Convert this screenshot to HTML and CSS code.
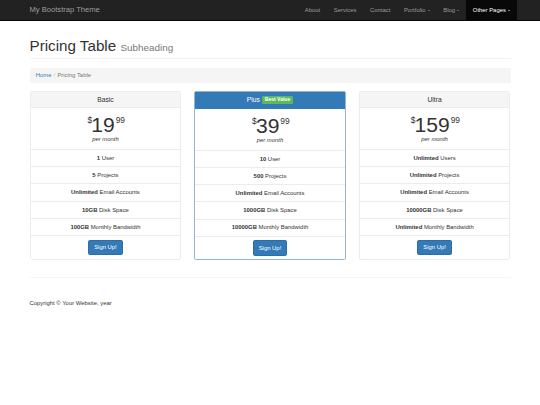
FILE: index.html
```html
<html>
<head>
    <meta charset="UTF-8">
    <meta name="viewport" content="width=device-width, initial-scale=1.0">
    <title>Pricing Table - My Bootstrap Theme</title>
    <link rel="stylesheet" href="styles.css">
</head>

<body>
<nav class="navbar">
    <div class="container navbar-inner">
        <a class="navbar-brand" href="#">My Bootstrap Theme</a>
        <ul class="nav">
            <li><a href="#">About</a></li>
            <li><a href="#">Services</a></li>
            <li><a href="#">Contact</a></li>
            <li><a href="#">Portfolio <span class="caret"></span></a></li>
            <li><a href="#">Blog <span class="caret"></span></a></li>
            <li class="active"><a href="#">Other Pages <span class="caret"></span></a></li>
        </ul>
    </div>
</nav>

<div class="container">
    <h1 class="page-header">Pricing Table <small>Subheading</small></h1>
    <ol class="breadcrumb">
        <li><a href="#">Home</a></li>
        <li class="active">Pricing Table</li>
    </ol>

    <div class="row">
        <div class="panel">
            <div class="panel-heading">
                <h3 class="panel-title">Basic</h3>
            </div>
            <div class="panel-body">
                <span class="price"><sup>$</sup>19<sup>99</sup></span>
                <span class="period">per month</span>
            </div>
            <ul class="list-group">
                <li class="list-group-item"><strong>1</strong> User</li>
                <li class="list-group-item"><strong>5</strong> Projects</li>
                <li class="list-group-item"><strong>Unlimited</strong> Email Accounts</li>
                <li class="list-group-item"><strong>10GB</strong> Disk Space</li>
                <li class="list-group-item"><strong>100GB</strong> Monthly Bandwidth</li>
                <li class="list-group-item"><a href="#" class="btn">Sign Up!</a></li>
            </ul>
        </div>

        <div class="panel panel-primary">
            <div class="panel-heading">
                <h3 class="panel-title">Plus <span class="label">Best Value</span></h3>
            </div>
            <div class="panel-body">
                <span class="price"><sup>$</sup>39<sup>99</sup></span>
                <span class="period">per month</span>
            </div>
            <ul class="list-group">
                <li class="list-group-item"><strong>10</strong> User</li>
                <li class="list-group-item"><strong>500</strong> Projects</li>
                <li class="list-group-item"><strong>Unlimited</strong> Email Accounts</li>
                <li class="list-group-item"><strong>1000GB</strong> Disk Space</li>
                <li class="list-group-item"><strong>10000GB</strong> Monthly Bandwidth</li>
                <li class="list-group-item"><a href="#" class="btn">Sign Up!</a></li>
            </ul>
        </div>

        <div class="panel">
            <div class="panel-heading">
                <h3 class="panel-title">Ultra</h3>
            </div>
            <div class="panel-body">
                <span class="price"><sup>$</sup>159<sup>99</sup></span>
                <span class="period">per month</span>
            </div>
            <ul class="list-group">
                <li class="list-group-item"><strong>Unlimted</strong> Users</li>
                <li class="list-group-item"><strong>Unlimited</strong> Projects</li>
                <li class="list-group-item"><strong>Unlimited</strong> Email Accounts</li>
                <li class="list-group-item"><strong>10000GB</strong> Disk Space</li>
                <li class="list-group-item"><strong>Unlimited</strong> Monthly Bandwidth</li>
                <li class="list-group-item"><a href="#" class="btn">Sign Up!</a></li>
            </ul>
        </div>
    </div>

    <hr>

    <footer>
        <p>Copyright &copy; Your Website, year</p>
    </footer>
</div>
</body>
</html>
```

FILE: styles.css
```css
        body {
            font-family: "Liberation Sans", Arial, Helvetica, sans-serif;
            font-size: 5.9px;
            line-height: 8.44px;
            color: #333;
            background-color: #fff;
            margin: 0;
            padding: 0;
        }

        a {
            color: #337ab7;
            text-decoration: none;
        }

        .container {
            width: 481px;
            margin: 0 auto;
        }

        /* top bar */
        .navbar {
            height: 20px;
            background-color: #222;
            border-bottom: 1px solid #080808;
        }

        .navbar-inner {
            display: flex;
            justify-content: space-between;
            align-items: stretch;
            height: 100%;
        }

        .navbar-brand {
            color: #9d9d9d;
            font-size: 7.6px;
            line-height: 20px;
        }

        .nav {
            display: flex;
            list-style: none;
            margin: 0 -6.33px 0 0;
            padding: 0;
        }

        .nav li a {
            display: block;
            padding: 0 6.8px;
            line-height: 20px;
            color: #9d9d9d;
        }

        .nav li.active a {
            color: #fff;
            background-color: #080808;
        }

        .caret {
            display: inline-block;
            width: 0;
            height: 0;
            margin-left: 0.5px;
            vertical-align: middle;
            border-top: 1.7px solid;
            border-right: 1.7px solid transparent;
            border-left: 1.7px solid transparent;
        }

        /* heading */
        .page-header {
            font-size: 15.2px;
            font-weight: 500;
            line-height: 16.7px;
            margin: 17.2px 0 8.4px;
            padding-bottom: 3.4px;
            border-bottom: 1px solid #f2f2f2;
        }

        .page-header small {
            font-size: 9.9px;
            font-weight: normal;
            line-height: 1;
            color: #777;
        }

        .breadcrumb {
            list-style: none;
            margin: 0 0 8.4px;
            padding: 3.3px 6.33px;
            background-color: #f5f5f5;
            border-radius: 1.7px;
            display: flex;
        }

        .breadcrumb li + li:before {
            content: "/";
            color: #ccc;
            padding: 0 2.1px;
        }

        .breadcrumb .active {
            color: #777;
        }

        /* pricing panels */
        .row {
            display: grid;
            grid-template-columns: repeat(3, 1fr);
            column-gap: 12.66px;
        }

        .panel {
            border: 1px solid #ececec;
            border-radius: 1.7px;
            margin-bottom: 8.4px;
            background-color: #fff;
        }

        .panel-heading {
            padding: 3.9px 6.33px;
            background-color: #f5f5f5;
            border-bottom: 1px solid #ececec;
            text-align: center;
        }

        .panel-title {
            margin: 0;
            font-size: 6.75px;
            font-weight: 500;
            line-height: 7.4px;
        }

        .panel-primary {
            border-color: #8fb4d6;
        }

        .panel-primary .panel-heading {
            background-color: #337ab7;
            border-bottom-color: #337ab7;
            color: #fff;
        }

        .label {
            display: inline-block;
            background-color: #5cb85c;
            color: #fff;
            font-size: 5.06px;
            font-weight: bold;
            line-height: 1;
            padding: 1px 3px 1.5px;
            border-radius: 1.2px;
            vertical-align: 0.5px;
        }

        .panel-body {
            padding: 5.6px 6.33px;
            text-align: center;
        }

        .price {
            display: block;
            font-size: 21.1px;
            line-height: 21.1px;
        }

        .price sup {
            position: relative;
            top: -8.44px;
            left: 0.84px;
            font-size: 8.44px;
            line-height: 0;
            vertical-align: baseline;
        }

        .period {
            display: block;
            font-style: italic;
        }

        .list-group {
            list-style: none;
            margin: 0;
            padding: 0;
            text-align: center;
        }

        .list-group-item {
            padding: 3.9px 6.33px;
            border-top: 1px solid #ececec;
        }

        .list-group-item:last-child {
            padding: 3.6px 6.33px;
        }

        strong {
            font-weight: bold;
        }

        .btn {
            display: inline-block;
            padding: 2.4px 5.06px;
            line-height: 8.44px;
            color: #fff;
            background-color: #337ab7;
            border: 1px solid #2e6da4;
            border-radius: 1.7px;
        }

        hr {
            margin: 8.4px 0;
            border: 0;
            border-top: 1px solid #f6f6f6;
        }

        footer {
            margin: 21.1px 0;
        }

        footer p {
            margin: 0;
        }
```
